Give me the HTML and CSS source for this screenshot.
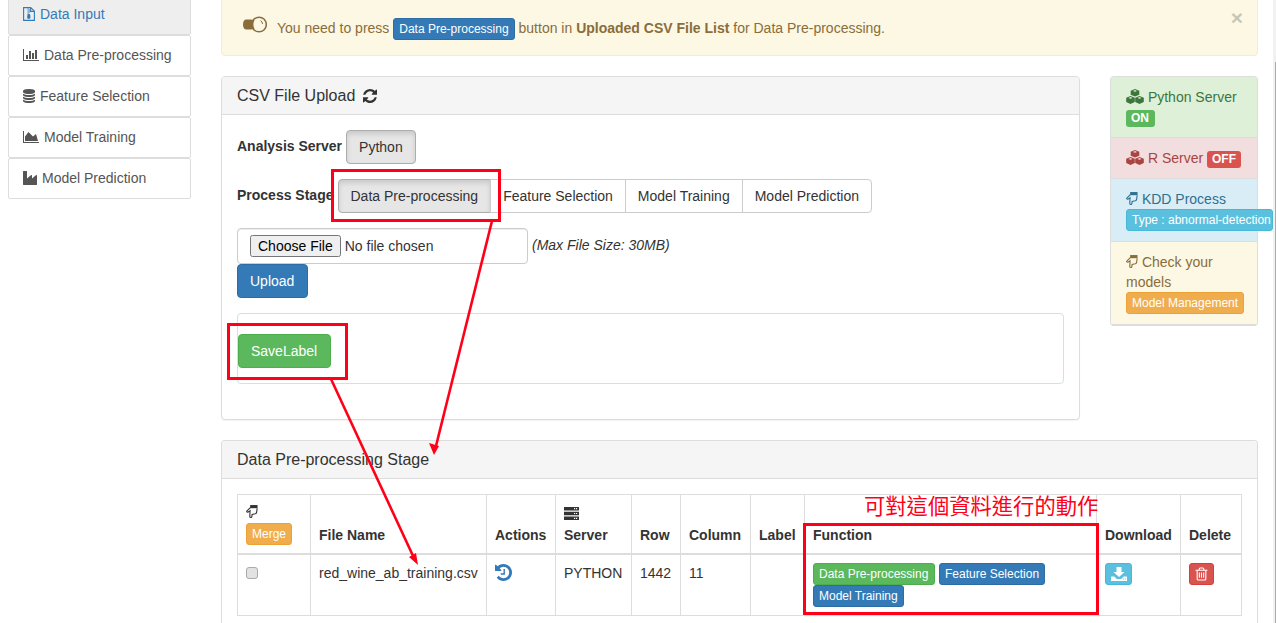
FILE: index.html
```html
<!DOCTYPE html>
<html lang="en">
<head>
    <meta charset="UTF-8">
    <meta name="viewport" content="width=device-width, initial-scale=1.0">
    <title>Data Input</title>
    <link rel="stylesheet" href="styles.css">
</head>
<body>
    <svg class="sprite" aria-hidden="true">
        <symbol id="i-zip" viewBox="0 0 12 14"><path d="M.6.6h7.200l3.600 3.600v9.200H.6z M7.600.8v3.600h3.600" fill="none" stroke="currentColor" stroke-width="1.100"/><path d="M4.400 1.500h1.400v1H4.400zM5.800 2.500h1.400v1H5.800zM4.400 3.500h1.400v1H4.400zM5.800 4.500h1.400v1H5.800zM4.400 5.500h1.400v1H4.400zM4.600 7h2.400l.5 3.200a1.700 1.700 0 1 1-3.400 0z" fill="currentColor"/></symbol>
        <symbol id="i-bars" viewBox="0 0 2048 1792"><path fill="currentColor" d="M640 896v512h-256v-512h256zm384-512v1024h-256v-1024h256zm1024 1152v128h-2048v-1536h128v1408h1920zm-640-896v768h-256v-768h256zm384-384v1152h-256v-1152h256z"/></symbol>
        <symbol id="i-db" viewBox="128 128 1536 1536"><path fill="currentColor" d="M896 768q237 0 443-43t325-127v170q0 69-103 128t-280 93.5-385 34.5-385-34.5-280-93.5-103-128v-170q119 84 325 127t443 43zm0 768q237 0 443-43t325-127v170q0 69-103 128t-280 93.5-385 34.5-385-34.5-280-93.5-103-128v-170q119 84 325 127t443 43zm0-384q237 0 443-43t325-127v170q0 69-103 128t-280 93.5-385 34.5-385-34.5-280-93.5-103-128v-170q119 84 325 127t443 43zm0-1152q208 0 385 34.5t280 93.5 103 128v128q0 69-103 128t-280 93.5-385 34.5-385-34.5-280-93.5-103-128v-128q0-69 103-128t280-93.5 385-34.5z"/></symbol>
        <symbol id="i-area" viewBox="0 0 2048 1792"><path fill="currentColor" d="M2048 1536v128h-2048v-1536h128v1408h1920zm-384-1024l256 896h-1664v-576l448-576 576 576z"/></symbol>
        <symbol id="i-factory" viewBox="0 0 1792 1792"><path fill="currentColor" d="M448 0q26 0 45 19t19 45v891l536-429q17-14 40-14 26 0 45 19t19 45v379l536-429q17-14 40-14 26 0 45 19t19 45v1152q0 26-19 45t-45 19h-1664q-26 0-45-19t-19-45v-1664q0-26 19-45t45-19h384z"/></symbol>
        <symbol id="i-refresh" viewBox="128 128 1536 1536"><path fill="currentColor" d="M1639 1056q0 5-1 7-64 268-268 434.5t-478 166.5q-146 0-282.5-55t-243.5-157l-129 129q-19 19-45 19t-45-19-19-45v-448q0-26 19-45t45-19h448q26 0 45 19t19 45-19 45l-137 137q71 66 161 102t187 36q134 0 250-65t186-179q11-17 53-117 8-23 30-23h192q13 0 22.5 9.5t9.5 22.5zm25-800v448q0 26-19 45t-45 19h-448q-26 0-45-19t-19-45 19-45l138-138q-148-137-349-137-134 0-250 65t-186 179q-11 17-53 117-8 23-30 23h-199q-13 0-22.5-9.5t-9.5-22.5v-7q65-268 270-434.5t480-166.5q146 0 284 55.5t245 156.5l130-129q19-19 45-19t45 19 19 45z"/></symbol>
        <symbol id="i-bulb" viewBox="0 0 24 17"><circle cx="16" cy="8.500" r="7.300" fill="none" stroke="currentColor" stroke-width="1.500"/><path fill="currentColor" d="M3 3.500c3 0 6 0 8.500.5-1.500 3-1.500 6 0 9-2.500.5-5.500.5-8.500.5-4 0-4-10 0-10z"/><path d="M17.500 4.500a4 4 0 0 1 2 3.500" fill="none" stroke="currentColor" stroke-width="1"/></symbol>
        <symbol id="i-cubes" viewBox="0 0 18 15"><g fill="currentColor"><path fill-rule="evenodd" d="M9 0l4.300 1.700v4L9 7.500 4.700 5.700v-4zM9 1.100L7 1.900 9 2.700l2-.8z"/><path fill-rule="evenodd" d="M4.500 7l4.300 1.700v4.300L4.500 15 .2 13V8.700zm0 1.100l-2 .8 2 .8 2-.8z"/><path fill-rule="evenodd" d="M13.500 7l4.300 1.700v4.300l-4.300 2-4.300-2V8.700zm0 1.100l-2 .8 2 .8 2-.8z"/></g></symbol>
        <symbol id="i-hand" viewBox="0 0 13 15"><path fill="currentColor" d="M4.500.5h8v3.400h-8z"/><path fill="none" stroke="currentColor" stroke-width="1.200" d="M5 3L.9 7c-.5.7.3 1.600 1.100 1.200l2.400-1.400-.3 6c0 1.500 2.200 1.500 2.300 0l.2-2.200 3.500-.6c.8-.2 1.300-.8 1.400-1.500l.6-4.500"/></symbol>
        <symbol id="i-server" viewBox="0 0 15 13"><path fill="currentColor" fill-rule="evenodd" d="M0 0h15v3.400H0zM10 1.100v1.200h1.200V1.100zm2 0v1.200h1.200V1.100zM0 4.800h15v3.400H0zM10 5.900v1.200h1.200V5.900zm2 0v1.200h1.200V5.900zM0 9.600h15V13H0zM10 10.700v1.200h1.200v-1.200zm2 0v1.200h1.200v-1.200z"/></symbol>
        <symbol id="i-history" viewBox="128 128 1536 1536"><path fill="currentColor" d="M1664 896q0 156-61 298t-164 245-245 164-298 61q-172 0-327-72.5t-264-204.5q-7-10-6.5-22.5t8.5-20.5l137-138q10-9 25-9 16 2 23 12 73 95 179 147t225 52q104 0 198.5-40.5t163.5-109.5 109.5-163.5 40.5-198.5-40.5-198.5-109.5-163.5-163.5-109.5-198.5-40.5q-98 0-188 35.5t-160 101.5l137 138q31 30 14 69-17 40-59 40h-448q-26 0-45-19t-19-45v-448q0-42 40-59 39-17 69 14l130 129q107-101 244.5-156.5t284.5-55.5q156 0 298 61t245 164 164 245 61 298zm-640-288v448q0 14-9 23t-23 9h-320q-14 0-23-9t-9-23v-64q0-14 9-23t23-9h224v-352q0-14 9-23t23-9h64q14 0 23 9t9 23z"/></symbol>
        <symbol id="i-download" viewBox="0 0 16 14"><path fill="currentColor" d="M5.500 0h5v5h3L8 10 2.500 5h3zM0 9.500h3.200L5.800 12h4.400l2.600-2.500H16V14H0zM11.800 11.500v1h1v-1zm2 0v1h1v-1z" fill-rule="evenodd"/></symbol>
        <symbol id="i-trash" viewBox="128 128 1536 1536"><path fill="currentColor" d="M704 736v576q0 14-9 23t-23 9h-64q-14 0-23-9t-9-23v-576q0-14 9-23t23-9h64q14 0 23 9t9 23zm256 0v576q0 14-9 23t-23 9h-64q-14 0-23-9t-9-23v-576q0-14 9-23t23-9h64q14 0 23 9t9 23zm256 0v576q0 14-9 23t-23 9h-64q-14 0-23-9t-9-23v-576q0-14 9-23t23-9h64q14 0 23 9t9 23zm128 724v-948h-896v948q0 22 7 40.5t14.5 27 10.5 8.5h832q3 0 10.5-8.5t14.5-27 7-40.5zm-672-1076h448l-48-117q-7-9-17-11h-317q-10 2-17 11zm928 32v64q0 14-9 23t-23 9h-96v948q0 83-47 143.5t-113 60.5h-832q-66 0-113-58.5t-47-141.5v-952h-96q-14 0-23-9t-9-23v-64q0-14 9-23t23-9h309l70-167q15-37 54-63t79-26h320q40 0 79 26t54 63l70 167h309q14 0 23 9t9 23z"/></symbol>
    </svg>

    <div class="page">
        <nav class="sidebar">
            <a class="side-item active"><svg class="ic w12"><use href="#i-zip"/></svg>Data Input</a>
            <a class="side-item"><svg class="ic w16"><use href="#i-bars"/></svg>Data Pre-processing</a>
            <a class="side-item"><svg class="ic w12"><use href="#i-db"/></svg>Feature Selection</a>
            <a class="side-item"><svg class="ic w16"><use href="#i-area"/></svg>Model Training</a>
            <a class="side-item"><svg class="ic w14"><use href="#i-factory"/></svg>Model Prediction</a>
        </nav>

        <main class="main">
            <div class="alert">
                <svg class="bulb"><use href="#i-bulb"/></svg>
                <span>You need to press <span class="btn-xs primary">Data Pre-processing</span> button in <b>Uploaded CSV File List</b> for Data Pre-processing.</span>
                <span class="close">&times;</span>
            </div>

            <div class="upload-row">
                <section class="panel upload-panel">
                    <h3 class="panel-heading">CSV File Upload <svg class="refresh"><use href="#i-refresh"/></svg></h3>
                    <div class="panel-body">
                        <div class="form-row">
                            <b class="row-label">Analysis Server</b>
                            <button class="btn on">Python</button>
                        </div>
                        <div class="form-row">
                            <b class="row-label">Process Stage</b>
                            <div class="btn-group">
                                <button class="btn on">Data Pre-processing</button>
                                <button class="btn">Feature Selection</button>
                                <button class="btn">Model Training</button>
                                <button class="btn">Model Prediction</button>
                            </div>
                        </div>
                        <div class="file-row">
                            <div class="file-box"><input type="file"></div>
                            <i class="row-label">(Max File Size: 30MB)</i>
                        </div>
                        <button class="btn primary upload-btn">Upload</button>
                        <div class="label-well">
                            <button class="btn success save-btn">SaveLabel</button>
                        </div>
                    </div>
                </section>

                <aside class="status-list">
                    <div class="status green"><svg class="cubes"><use href="#i-cubes"/></svg> Python Server <span class="tag tag-green">ON</span></div>
                    <div class="status red"><svg class="cubes"><use href="#i-cubes"/></svg> R Server <span class="tag tag-red">OFF</span></div>
                    <div class="status blue"><svg class="hand"><use href="#i-hand"/></svg> KDD Process <span class="btn-xs info type-btn">Type : abnormal-detection</span></div>
                    <div class="status yellow"><svg class="hand"><use href="#i-hand"/></svg> Check your models <span class="btn-xs warning">Model Management</span></div>
                </aside>
            </div>

            <section class="panel stage-panel">
                <h3 class="panel-heading">Data Pre-processing Stage</h3>
                <div class="panel-body">
                    <table class="file-table">
                        <colgroup>
                            <col class="c1"><col class="c2"><col class="c3"><col class="c4"><col class="c5">
                            <col class="c6"><col class="c7"><col class="c8"><col class="c9"><col class="c10">
                        </colgroup>
                        <thead>
                            <tr>
                                <th><svg class="hand block"><use href="#i-hand"/></svg><span class="btn-xs warning">Merge</span></th>
                                <th>File Name</th>
                                <th>Actions</th>
                                <th><svg class="server"><use href="#i-server"/></svg>Server</th>
                                <th>Row</th>
                                <th>Column</th>
                                <th>Label</th>
                                <th>Function</th>
                                <th>Download</th>
                                <th>Delete</th>
                            </tr>
                        </thead>
                        <tbody>
                            <tr>
                                <td><input type="checkbox" class="check"></td>
                                <td>red_wine_ab_training.csv</td>
                                <td><svg class="history"><use href="#i-history"/></svg></td>
                                <td>PYTHON</td>
                                <td>1442</td>
                                <td>11</td>
                                <td></td>
                                <td class="funcs">
                                    <span class="btn-xs success">Data Pre-processing</span>
                                    <span class="btn-xs primary">Feature Selection</span>
                                    <span class="btn-xs primary">Model Training</span>
                                </td>
                                <td><span class="btn-xs info icon-btn"><svg class="dl"><use href="#i-download"/></svg></span></td>
                                <td><span class="btn-xs danger icon-btn"><svg class="del"><use href="#i-trash"/></svg></span></td>
                            </tr>
                        </tbody>
                    </table>
                </div>
            </section>
        </main>
    </div>

    <div class="scrollbar"><div class="thumb"></div></div>

    <!-- red notes drawn over the screenshot -->
    <svg class="notes" viewBox="0 0 1276 623">
        <g fill="none" stroke="#ff0018" stroke-width="3">
            <rect x="332.500" y="170.500" width="167" height="50"/>
            <rect x="228.500" y="324.500" width="118" height="54"/>
            <rect x="804.500" y="524.500" width="293" height="89"/>
        </g>
        <g stroke="#ff0018" stroke-width="2.600">
            <path d="M492 221L436 446"/>
            <path d="M331 379L414 558"/>
        </g>
        <path fill="#ff0018" d="M434 455l-5-12 10 3zM418 565l-9-8 7-4z"/>
    </svg>
    <div class="note-text">可對這個資料進行的動作</div>
</body>
</html>
```

FILE: styles.css
```css
* {
    box-sizing: border-box;
}
html, body {
    height: 623px;
    overflow: hidden;
}
body {
    margin: 0;
    font-family: "Liberation Sans", Arial, sans-serif;
    font-size: 14px;
    line-height: 20px;
    color: #333;
    background-color: white;
}
.sprite {
    display: none;
}
.page {
    display: flex;
    align-items: flex-start;
    margin-top: -6px;
    padding-left: 8px;
}

/* sidebar */
.sidebar {
    width: 183px;
    flex: none;
}
.side-item {
    display: flex;
    align-items: center;
    gap: 5px;
    height: 41px;
    padding: 0 0 2px 14px;
    color: #555;
    background-color: white;
    border: 1px solid #ddd;
    border-radius: 2px;
}
.side-item.active {
    color: #337ab7;
    background-color: #eee;
}
.ic {
    height: 14px;
    flex: none;
}
.w12 { width: 12px; }
.w14 { width: 14px; }
.w16 { width: 16px; }

.main {
    width: 1037px;
    margin-left: 30px;
    flex: none;
}

/* alert */
.alert {
    display: flex;
    align-items: center;
    position: relative;
    height: 62px;
    padding: 8px 21px 0;
    color: #8a6d3b;
    background-color: #fcf8e3;
    border: 1px solid #faebcc;
    border-radius: 4px;
}
.bulb {
    width: 24px;
    height: 17px;
    margin-right: 10px;
    margin-top: -10px;
}
.close {
    position: absolute;
    right: 14px;
    top: 13px;
    font-size: 21px;
    font-weight: bold;
    color: #000;
    opacity: 0.2;
}

/* small buttons */
.btn-xs {
    display: inline-block;
    padding: 1px 5px;
    font-size: 12px;
    font-weight: normal;
    line-height: 18px;
    color: white;
    border: 1px solid transparent;
    border-radius: 3px;
    white-space: nowrap;
    vertical-align: middle;
}
.primary { background-color: #337ab7; border-color: #2e6da4; color: white; }
.success { background-color: #5cb85c; border-color: #4cae4c; color: white; }
.info { background-color: #5bc0de; border-color: #46b8da; color: white; }
.warning { background-color: #f0ad4e; border-color: #eea236; color: white; }
.danger { background-color: #d9534f; border-color: #d43f3a; color: white; }

/* panels */
.upload-row {
    display: flex;
    align-items: flex-start;
    margin-top: 20px;
}
.panel {
    background-color: white;
    border: 1px solid #ddd;
    border-radius: 4px;
    box-shadow: 0 1px 1px rgba(0, 0, 0, 0.05);
}
.upload-panel {
    width: 859px;
    height: 344px;
}
.panel-heading {
    display: flex;
    align-items: center;
    gap: 8px;
    height: 38px;
    margin: 0;
    padding: 0 15px;
    font-size: 16px;
    font-weight: normal;
    background-color: #f5f5f5;
    border-bottom: 1px solid #ddd;
    border-radius: 3px 3px 0 0;
}
.refresh {
    width: 14px;
    height: 14px;
}
.panel-body {
    padding: 15px;
}
.form-row {
    display: flex;
    align-items: center;
    gap: 4px;
    margin-bottom: 15px;
}
.row-label {
    padding-bottom: 2px;
}
.btn {
    display: inline-block;
    height: 34px;
    padding: 6px 12px;
    font-family: inherit;
    font-size: 14px;
    line-height: 20px;
    color: #333;
    background-color: white;
    border: 1px solid #ccc;
    border-radius: 4px;
}
.btn.on {
    background-color: #e6e6e6;
    border-color: #adadad;
    box-shadow: inset 0 3px 5px rgba(0, 0, 0, 0.125);
}
.btn.primary { background-color: #337ab7; border-color: #2e6da4; color: white; }
.btn.success { background-color: #5cb85c; border-color: #4cae4c; color: white; }
.upload-btn { width: 71px; text-align: left; }
.save-btn { width: 93px; text-align: left; }
.btn-group {
    display: flex;
}
.btn-group .btn {
    border-radius: 0;
    margin-left: -1px;
}
.btn-group .btn:first-child {
    margin-left: 0;
    border-radius: 4px 0 0 4px;
}
.btn-group .btn:last-child {
    border-radius: 0 4px 4px 0;
}
.file-row {
    display: flex;
    align-items: center;
    gap: 4px;
}
.file-box {
    width: 291px;
    height: 36px;
    padding: 6px 12px;
    background-color: white;
    border: 1px solid #ccc;
    border-radius: 4px;
    box-shadow: inset 0 1px 1px rgba(0, 0, 0, 0.075);
}
.file-box input {
    width: 100%;
    font-family: inherit;
    font-size: 14px;
}
.label-well {
    height: 71px;
    margin-top: 15px;
    padding: 20px 0 0;
    border: 1px solid #c8e5ec;
    border-radius: 4px;
}

/* status list on the right */
.status-list {
    width: 148px;
    margin-left: 30px;
    flex: none;
    border: 1px solid #ddd;
    border-bottom-width: 2px;
    border-radius: 4px;
}
.status {
    padding: 10px 15px;
    border-bottom: 1px solid #ddd;
}
.status:last-child {
    border-bottom: 0;
}
.green { color: #3c763d; background-color: #dff0d8; }
.red { color: #a94442; background-color: #f2dede; }
.blue { color: #31708f; background-color: #d9edf7; }
.yellow { color: #8a6d3b; background-color: #fcf8e3; }
.cubes {
    width: 18px;
    height: 15px;
    vertical-align: -2px;
}
.hand {
    width: 12px;
    height: 15px;
    vertical-align: -2px;
}
.hand.block {
    display: block;
    margin-bottom: 3px;
    color: #333;
}
.tag {
    display: inline-block;
    height: 17px;
    padding: 0 5px;
    font-size: 12px;
    font-weight: bold;
    line-height: 17px;
    color: white;
    border-radius: 3px;
    vertical-align: 0;
}
.tag-green {
    display: block;
    width: 29px;
    margin-top: 3px;
    background-color: #5cb85c;
}
.tag-red { background-color: #d9534f; }
.status .btn-xs {
    display: block;
    width: max-content;
    height: 22px;
}
.status .type-btn {
    width: 147px;
}

/* data stage */
.stage-panel {
    margin-top: 20px;
    height: 183px;
    border-bottom: 0;
    border-radius: 4px 4px 0 0;
    box-shadow: none;
}
.file-table {
    width: 1004px;
    table-layout: fixed;
    border-collapse: collapse;
}
.c1 { width: 73px; }
.c2 { width: 176px; }
.c3 { width: 69px; }
.c4 { width: 76px; }
.c5 { width: 49px; }
.c6 { width: 70px; }
.c7 { width: 54px; }
.c8 { width: 292px; }
.c9 { width: 84px; }
.c10 { width: 61px; }
.file-table th, .file-table td {
    padding: 8px;
    text-align: left;
    border: 1px solid #ddd;
}
.file-table th {
    height: 59px;
    vertical-align: bottom;
    border-bottom-width: 2px;
}
.file-table td {
    height: 62px;
    vertical-align: top;
}
.server {
    display: block;
    width: 15px;
    height: 13px;
    margin-bottom: 5px;
}
.check {
    appearance: none;
    display: block;
    width: 12px;
    height: 12px;
    margin: 4px 0 0;
    background-color: #e2e2e2;
    border: 1px solid #aaa;
    border-radius: 3px;
}
.history {
    display: block;
    width: 17px;
    height: 17px;
    margin-top: 1px;
    color: #337ab7;
}
.funcs {
    font-size: 0;
}
.funcs .btn-xs {
    margin-right: 4px;
}
.funcs .success {
    width: 122px;
}
.icon-btn {
    display: block;
    height: 22px;
    padding: 1px 5px;
}
.file-table .info { width: 27px; }
.file-table .danger { width: 25px; }
.dl {
    display: block;
    width: 16px;
    height: 14px;
    margin-top: 2px;
}
.del {
    display: block;
    width: 13px;
    height: 14px;
    margin: 2px 0 0 0;
}

/* window scrollbar */
.scrollbar {
    position: absolute;
    top: 0;
    right: 0;
    width: 3px;
    height: 623px;
    background-color: #f1f1f1;
}
.thumb {
    position: absolute;
    top: 62px;
    right: 0;
    width: 1px;
    height: 561px;
    background-color: #aaa;
}

/* annotations */
.notes {
    position: absolute;
    left: 0;
    top: 0;
    width: 1276px;
    height: 623px;
    pointer-events: none;
}
.note-text {
    position: absolute;
    left: 864px;
    top: 492px;
    font-family: "Noto Sans CJK TC", sans-serif;
    font-size: 21.3px;
    line-height: 26px;
    color: #ff0018;
    white-space: nowrap;
}
```
